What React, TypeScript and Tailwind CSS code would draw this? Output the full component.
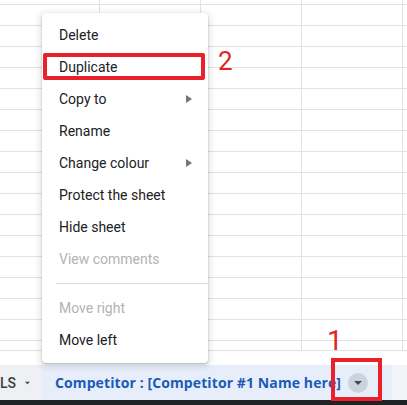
import React from "react";

const menuItems: { label: string; arrow?: boolean; disabled?: boolean; sep?: boolean }[] = [
  { label: "Delete" },
  { label: "Duplicate" },
  { label: "Copy to", arrow: true },
  { label: "Rename" },
  { label: "Change colour", arrow: true },
  { label: "Protect the sheet" },
  { label: "Hide sheet" },
  { label: "View comments", disabled: true },
  { label: "", sep: true },
  { label: "Move right", disabled: true },
  { label: "Move left" },
];

const rowCount = 16;

function GridRow({ h }: { h: string }) {
  return (
    <div className={`flex shrink-0 border-b border-[#e2e2e2] ${h}`}>
      <div className="w-[100px] shrink-0 border-r border-[#e2e2e2]" />
      <div className="w-[101px] shrink-0 border-r border-[#e2e2e2]" />
      <div className="w-[101px] shrink-0 border-r border-[#e2e2e2]" />
      <div className="w-[101px] shrink-0 border-r border-[#e2e2e2]" />
    </div>
  );
}

function Arrow() {
  return (
    <svg width="6" height="8" viewBox="0 0 6 8" className="fill-[#70757a]">
      <path d="M0 0 L6 4 L0 8 Z" />
    </svg>
  );
}

export default function App() {
  return (
    <div className="relative w-[407px] h-[405px] overflow-hidden bg-white flex flex-col font-['Roboto',sans-serif]">
      {/* Sheet grid */}
      <div className="h-[365px] shrink-0 flex flex-col">
        <GridRow h="h-[5px]" />
        {Array.from({ length: rowCount }).map((_, i) => (
          <GridRow key={i} h="h-[21px]" />
        ))}
        <GridRow h="h-[10px]" />
      </div>

      {/* Sheet tabs */}
      <div className="h-[35px] shrink-0 flex items-stretch bg-[#f1f3f6]">
        <div className="w-[41px] shrink-0 flex items-center justify-end gap-[9px] pr-[11px] bg-[#eef0f3]">
          <span className="text-[14px] font-medium text-[#3c4043] leading-none">LS</span>
          <svg width="7" height="4" viewBox="0 0 8 4" className="fill-[#3c4043]">
            <path d="M0 0 L8 0 L4 4 Z" />
          </svg>
        </div>
        <div className="w-[351px] shrink-0 flex items-center pl-[14px] bg-[#e7eef9]">
          <span className="text-[14px] font-bold text-[#1b5bb8] leading-none whitespace-nowrap font-['Open_Sans',sans-serif] tracking-[0.1px]">
            Competitor : [Competitor #1 Name here]
          </span>
          <span className="ml-[7px] w-[20px] h-[20px] rounded-full bg-[#cbd3de] flex items-center justify-center">
            <svg width="8" height="4" viewBox="0 0 8 4" className="fill-[#3c4a5c]">
              <path d="M0 0 L8 0 L4 4 Z" />
            </svg>
          </span>
        </div>
      </div>
      <div className="flex-1 bg-[#202124]" />

      {/* Context menu */}
      <div className="absolute left-[42px] top-[13px] w-[166px] rounded-[4px] bg-white py-[6px] pb-[7px] shadow-[0_2px_6px_2px_rgba(60,64,67,0.15),0_1px_2px_rgba(60,64,67,0.3)]">
        {menuItems.map((item, i) =>
          item.sep ? (
            <div key={i} className="h-[17px] flex items-center pl-[14px]">
              <div className="w-full border-t border-[#dadce0]" />
            </div>
          ) : (
            <div
              key={i}
              className={`h-[32px] flex items-center justify-between pl-[17px] pr-[16px] text-[14px] ${
                item.disabled ? "text-[#b3b3b3]" : "text-[#202124]"
              }`}
            >
              <span>{item.label}</span>
              {item.arrow && <Arrow />}
            </div>
          )
        )}
      </div>

      {/* Annotations */}
      <div className="absolute left-[43px] top-[53px] w-[162px] h-[27px] border-[4px] border-[#e8212a] rounded-[2px]" />
      <span className="absolute left-[218px] top-[46px] text-[26px] leading-[30px] text-[#e02525]">2</span>
      <span className="absolute left-[327px] top-[326px] text-[28px] leading-[30px] text-[#e02525]">1</span>
      <div className="absolute left-[331px] top-[358px] w-[51px] h-[43px] border-[4px] border-[#e8212a]" />
    </div>
  );
}
